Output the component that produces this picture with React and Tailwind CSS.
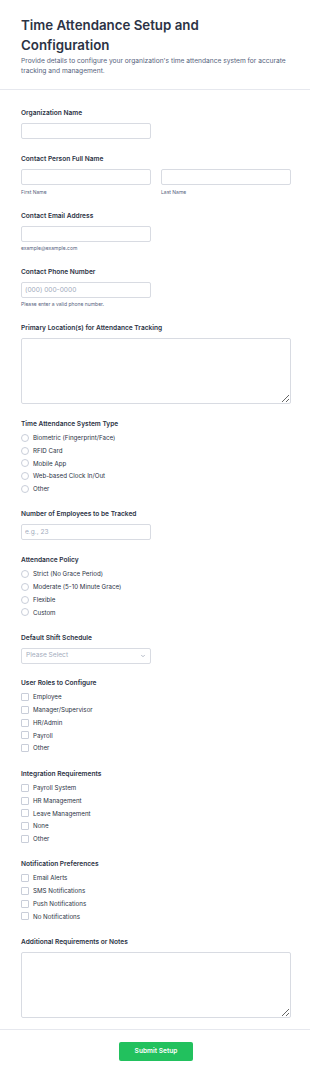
import { ChevronDown } from 'lucide-react';

const font = { fontFamily: 'Inter, "Noto Sans", sans-serif' };

function Label({ children }) {
  return (
    <div className="text-[6.6px] leading-[10px] font-semibold text-[#2c3345]">{children}</div>
  );
}

function Sub({ children, mt = 'mt-[3px]' }) {
  return <div className={`${mt} text-[5px] leading-[7px] text-[#57647e]`}>{children}</div>;
}

function TextInput({ placeholder, wide }) {
  return (
    <input
      type="text"
      placeholder={placeholder}
      className={`${wide ? 'w-full' : 'w-[130px]'} block h-[16px] px-[3px] text-[6.6px] text-[#2c3345] placeholder-[#a3acbd] border border-[#d8dbe2] rounded-[2px] bg-white outline-none`}
    />
  );
}

function Options({ items, type }) {
  return (
    <div className="mt-[2.5px] flex flex-col">
      {items.map((item) => (
        <div key={item} className="h-[12.75px] flex items-center gap-[4px]">
          <span
            className={`w-[8px] h-[8px] border border-[#c9ced9] bg-white ${type === 'radio' ? 'rounded-full' : 'rounded-[1px]'}`}
          />
          <span className="text-[6.2px] text-[#2c3345]">{item}</span>
        </div>
      ))}
    </div>
  );
}

export default function App() {
  return (
    <div className="w-[310px] min-h-[1078px] bg-white" style={font}>
      <div className="pl-[21px] pr-[19px] pt-[15px] pb-[13px]">
        <h1 className="max-w-[225px] text-[13.3px] leading-[20px] font-semibold text-[#2c3345]">
          Time Attendance Setup and Configuration
        </h1>
        <p className="mt-[1px] text-[6.65px] leading-[10px] text-[#57647e]">
          Provide details to configure your organization's time attendance system for accurate tracking and management.
        </p>
      </div>

      <div className="border-t border-[#e6e8ee] pl-[21px] pr-[19px] pt-[18px] pb-[11px] flex flex-col">
        <div className="pb-[15px]">
          <Label>Organization Name</Label>
          <div className="mt-[5px]"><TextInput /></div>
        </div>

        <div className="pb-[15px]">
          <Label>Contact Person Full Name</Label>
          <div className="mt-[5px] grid grid-cols-2 gap-[10px]">
            <div>
              <TextInput wide />
              <Sub mt="mt-[4px]">First Name</Sub>
            </div>
            <div>
              <TextInput wide />
              <Sub mt="mt-[4px]">Last Name</Sub>
            </div>
          </div>
        </div>

        <div className="pb-[15px]">
          <Label>Contact Email Address</Label>
          <div className="mt-[5px]"><TextInput /></div>
          <Sub>example@example.com</Sub>
        </div>

        <div className="pb-[15px]">
          <Label>Contact Phone Number</Label>
          <div className="mt-[5px]"><TextInput placeholder="(000) 000-0000" /></div>
          <Sub>Please enter a valid phone number.</Sub>
        </div>

        <div className="pb-[15px]">
          <Label>Primary Location(s) for Attendance Tracking</Label>
          <textarea className="mt-[5px] block w-full h-[66px] border border-[#d8dbe2] rounded-[2px] outline-none" />
        </div>

        <div className="pb-[14px]">
          <Label>Time Attendance System Type</Label>
          <Options
            type="radio"
            items={['Biometric (Fingerprint/Face)', 'RFID Card', 'Mobile App', 'Web-based Clock In/Out', 'Other']}
          />
        </div>

        <div className="pb-[15px]">
          <Label>Number of Employees to be Tracked</Label>
          <div className="mt-[5px]"><TextInput placeholder="e.g., 23" /></div>
        </div>

        <div className="pb-[14.5px]">
          <Label>Attendance Policy</Label>
          <Options
            type="radio"
            items={['Strict (No Grace Period)', 'Moderate (5-10 Minute Grace)', 'Flexible', 'Custom']}
          />
        </div>

        <div className="pb-[14px]">
          <Label>Default Shift Schedule</Label>
          <div className="mt-[5px] w-[130px] h-[16px] px-[4px] flex items-center justify-between border border-[#d8dbe2] rounded-[2px]">
            <span className="text-[6.6px] text-[#a3acbd]">Please Select</span>
            <ChevronDown className="w-[6px] h-[6px] text-[#8a93a6]" strokeWidth={2.5} />
          </div>
        </div>

        <div className="pb-[14.5px]">
          <Label>User Roles to Configure</Label>
          <Options type="checkbox" items={['Employee', 'Manager/Supervisor', 'HR/Admin', 'Payroll', 'Other']} />
        </div>

        <div className="pb-[14px]">
          <Label>Integration Requirements</Label>
          <Options
            type="checkbox"
            items={['Payroll System', 'HR Management', 'Leave Management', 'None', 'Other']}
          />
        </div>

        <div className="pb-[14.5px]">
          <Label>Notification Preferences</Label>
          <Options
            type="checkbox"
            items={['Email Alerts', 'SMS Notifications', 'Push Notifications', 'No Notifications']}
          />
        </div>

        <div>
          <Label>Additional Requirements or Notes</Label>
          <textarea className="mt-[5px] block w-full h-[66px] border border-[#d8dbe2] rounded-[2px] outline-none" />
        </div>
      </div>

      <div className="border-t border-[#e6e8ee] pl-[21px] pr-[19px] pt-[12px] pb-[17px] flex justify-center">
        <button
          type="button"
          className="w-[74px] h-[19px] rounded-[2px] bg-[#22c15e] text-white text-[6.6px] font-semibold"
        >
          Submit Setup
        </button>
      </div>
    </div>
  );
}
